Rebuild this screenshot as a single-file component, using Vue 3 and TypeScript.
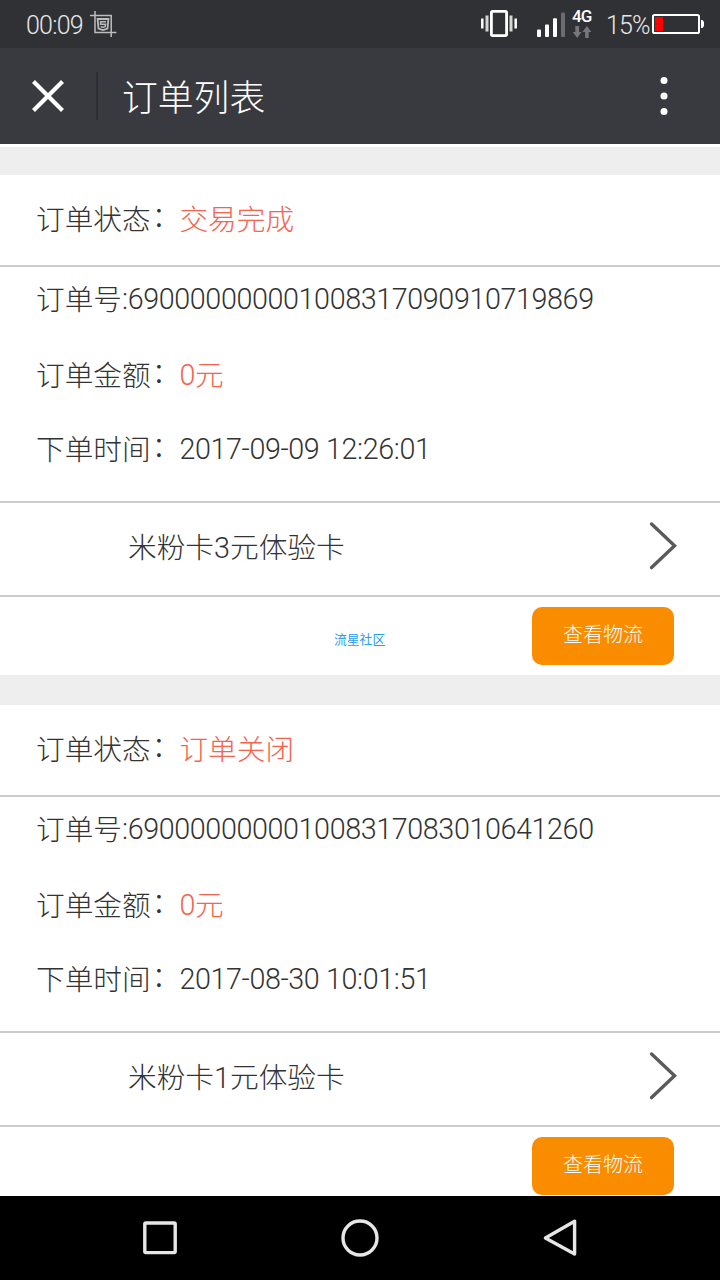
<script setup lang="ts">
interface Order {
  status: string
  number: string
  amount: number
  time: string
  product: string
  watermark?: string
}

const orders: Order[] = [
  {
    status: '交易完成',
    number: '690000000001008317090910719869',
    amount: 0,
    time: '2017-09-09 12:26:01',
    product: '米粉卡3元体验卡',
    watermark: '流星社区',
  },
  {
    status: '订单关闭',
    number: '690000000001008317083010641260',
    amount: 0,
    time: '2017-08-30 10:01:51',
    product: '米粉卡1元体验卡',
  },
]
</script>

<template>
  <div class="phone">
    <div class="statusbar">
      <span class="clock">00:09</span>
      <svg class="crop" width="28" height="28" viewBox="0 0 28 28" fill="none" stroke="#bdbdbe" stroke-width="1.5">
        <path d="M5 1V22.5H26.4M0 5.5H21.2V27" />
        <path d="M7.6 9H18.4L17.5 18.6L13 20L8.5 18.6Z" stroke-width="1.8" />
        <path d="M16 11.8H10.6V14.3H15.6L15.1 16.7L13 17.3L10.6 16.6" />
      </svg>
      <span class="spacer"></span>
      <svg class="vibrate" width="38" height="30" viewBox="0 0 38 30">
        <rect x="11.4" y="2.4" width="15.2" height="24.2" rx="1.3" fill="none" stroke="#fff" stroke-width="2.8" />
        <path d="M2.3 9.5V19.5M35.7 9.5V19.5" stroke="#fff" stroke-width="2.5" />
        <path d="M7 6.5V22.5M31 6.5V22.5" stroke="#d5d5d5" stroke-width="3" />
      </svg>
      <svg class="signal" width="28" height="26" viewBox="0 0 28 26">
        <rect x="0" y="17.5" width="4" height="7.5" rx="1" fill="#fff" />
        <rect x="8" y="12.5" width="4" height="12.5" rx="1" fill="#fff" />
        <rect x="16" y="6.3" width="4" height="18.7" rx="1" fill="#fff" />
        <rect x="24" y="0.5" width="4" height="24.5" rx="1" fill="#6c6c6f" />
      </svg>
      <div class="network">
        <span class="gen">4G</span>
        <svg width="20" height="12" viewBox="0 0 20 12" fill="#77777a">
          <path d="M3.3 0H7.1V6H9.6L5.2 12L.8 6H3.3Z" />
          <path d="M13.1 12H16.7V6H19.4L14.9 0L10.4 6H13.1Z" />
        </svg>
      </div>
      <span class="percent">15%</span>
      <svg class="battery" width="52" height="20" viewBox="0 0 52 20">
        <rect x="1" y="1" width="46" height="18" rx="1.6" fill="none" stroke="#fff" stroke-width="2" />
        <rect x="3" y="3" width="8" height="14" fill="#f00" />
        <path d="M49 6H50.5L52 8V12L50.5 14H49Z" fill="#fff" />
      </svg>
    </div>

    <header class="titlebar">
      <svg class="close" width="32" height="32" viewBox="0 0 32 32" stroke="#fff" stroke-width="4.2">
        <path d="M1.5 1.5L30.5 30.5M30.5 1.5L1.5 30.5" />
      </svg>
      <i class="divider"></i>
      <h1>订单列表</h1>
      <svg class="more" width="8" height="40" viewBox="0 0 8 40" fill="#fff">
        <circle cx="4" cy="4.6" r="3.5" />
        <circle cx="4" cy="20" r="3.5" />
        <circle cx="4" cy="35.4" r="3.5" />
      </svg>
    </header>

    <main class="list">
      <section v-for="order in orders" :key="order.number" class="order">
        <div class="status">订单状态<span class="colon">：</span><em>{{ order.status }}</em></div>
        <div class="details">
          <p class="no">订单号<span class="num">:{{ order.number }}</span></p>
          <p class="amount">订单金额<span class="colon">：</span><em><span class="num">{{ order.amount }}</span>元</em></p>
          <p class="time">下单时间<span class="colon">：</span><span class="num">{{ order.time }}</span></p>
        </div>
        <div class="product">
          <span>{{ order.product }}</span>
          <svg width="28" height="48" viewBox="0 0 28 48" fill="none" stroke="#5a5a5a" stroke-width="3.4" stroke-linecap="round">
            <path d="M2.6 2L25.6 23.8L2.6 45.6" />
          </svg>
        </div>
        <div class="actions">
          <span class="mark">{{ order.watermark }}</span>
          <button type="button">查看物流</button>
        </div>
      </section>
    </main>

    <nav class="navbar">
      <svg width="40" height="40" viewBox="0 0 40 40"><rect x="4.8" y="5" width="30.4" height="29.6" rx="1" /></svg>
      <svg width="40" height="40" viewBox="0 0 40 40"><circle cx="20" cy="20" r="17" /></svg>
      <svg width="40" height="40" viewBox="0 0 40 40"><path d="M34.6 3.2V36L5.4 20Z" stroke-linejoin="round" /></svg>
    </nav>
  </div>
</template>

<style>
body {
  margin: 0;
  background: #000;
}
</style>

<style scoped>
.phone {
  width: 720px;
  height: 1280px;
  overflow: hidden;
  display: flex;
  flex-direction: column;
  background: #fff;
  color: #333;
  font-family: Roboto, 'Noto Sans CJK SC', sans-serif;
  font-weight: 300;
}
.statusbar {
  height: 48px;
  flex: none;
  box-sizing: border-box;
  display: flex;
  align-items: center;
  padding: 0 16px 0 26px;
  background: #303135;
  color: #e8e8e8;
  font-size: 25px;
}
.clock {
  width: 64px;
  padding-top: 2px;
  letter-spacing: -0.75px;
  white-space: nowrap;
}
.spacer {
  flex: 1;
}
.signal {
  margin-left: 19px;
  margin-top: 1px;
}
.network {
  width: 20px;
  margin-left: 7px;
  display: flex;
  flex-direction: column;
}
.gen {
  height: 16px;
  line-height: 13px;
  font-size: 17px;
  font-weight: 500;
  letter-spacing: -0.9px;
  color: #fff;
}
.percent {
  width: 46px;
  padding-top: 2px;
  margin-left: 14px;
  letter-spacing: -0.9px;
  white-space: nowrap;
}
.titlebar {
  height: 96px;
  flex: none;
  box-sizing: border-box;
  display: flex;
  align-items: center;
  padding: 0 52px 0 32px;
  background: #393a3f;
  color: #fff;
}
.divider {
  width: 2px;
  height: 48px;
  margin: 0 24px 0 32px;
  background: #2e2f33;
}
h1 {
  flex: 1;
  margin: 0;
  padding-top: 6px;
  font-size: 35.8px;
  font-weight: 300;
  line-height: 48px;
}
.list {
  height: 1052px;
  flex: none;
  box-sizing: border-box;
  padding-top: 3px;
  overflow: hidden;
}
.order {
  border-top: 30px solid #eee;
}
.order:first-child {
  border-top-width: 28px;
}
.status,
.details p,
.product {
  font-size: 28.7px;
  line-height: 40px;
}
em {
  font-style: normal;
  color: #f4644f;
}
.colon {
  padding-left: 1px;
  margin-right: -1px;
  line-height: 0;
  vertical-align: 3px;
}
.num {
  line-height: 0;
  letter-spacing: -0.38px;
  vertical-align: 1px;
}
.status {
  height: 92px;
  box-sizing: border-box;
  padding: 25px 36px 0;
  border-bottom: 2px solid #ccc;
}
.details {
  height: 236px;
  box-sizing: border-box;
  padding: 13px 36px 0;
  border-bottom: 2px solid #ccc;
}
.details p {
  margin: 0;
  white-space: nowrap;
}
.details .amount {
  margin: 36px 0 34px;
}
.product {
  height: 94px;
  box-sizing: border-box;
  display: flex;
  align-items: center;
  justify-content: space-between;
  padding: 0 43px 6px 128px;
  border-bottom: 2px solid #ccc;
}
.product span {
  padding-top: 4px;
}
.actions {
  height: 78px;
  box-sizing: border-box;
  display: flex;
  justify-content: space-between;
  padding: 10px 46px 0 334px;
}
.mark {
  padding-top: 24px;
  font-size: 12.8px;
  line-height: 18px;
  font-weight: 400;
  color: #2a9df4;
}
button {
  width: 142px;
  height: 58px;
  padding: 0 0 6px;
  border: 0;
  border-radius: 10px;
  background: #fa8c00;
  color: #fff;
  font: inherit;
  font-size: 20px;
}
.navbar {
  height: 84px;
  flex: none;
  box-sizing: border-box;
  display: flex;
  justify-content: space-between;
  align-items: center;
  padding: 0 140px;
  background: #000;
}
.navbar svg {
  fill: none;
  stroke: #e6e6e6;
  stroke-width: 3.4;
}
</style>
